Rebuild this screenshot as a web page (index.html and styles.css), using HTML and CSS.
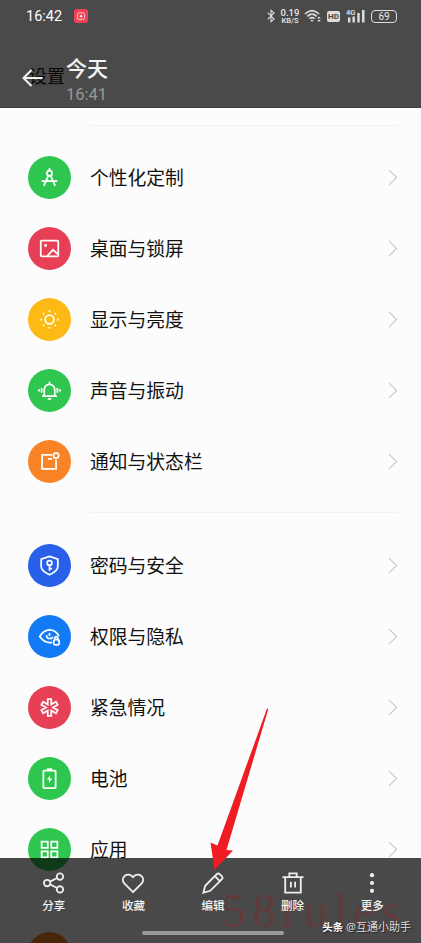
FILE: index.html
```html
<!DOCTYPE html>
<html lang="zh-CN">
<head>
<meta charset="utf-8">
<title>设置</title>
<link rel="stylesheet" href="styles.css">
</head>
<body>
<main class="phone">
  <header class="top">
    <div class="status">
      <span class="clock">16:42</span>
      <svg class="rec" width="14" height="14" viewBox="0 0 14 14"><rect width="14" height="14" rx="3" fill="#ee4458"/><rect x="3.5" y="3.8" width="7" height="6.8" rx="2" fill="none" stroke="#ffc6ca"/><circle cx="7" cy="7.2" r="1.3" fill="#ffe1e3"/></svg>
      <svg class="bt" width="8" height="14" viewBox="0 0 8 14" fill="none" stroke="#ddd" stroke-width="1.1"><path d="M.7 3.7 7 10 4 12.7V1.3L7 4 .7 10.3"/></svg>
      <span class="speed"><b>0.19</b><i>KB/S</i></span>
      <svg class="wifi" width="18" height="14" viewBox="0 0 18 14" fill="none" stroke="#ddd" stroke-width="1.6"><path d="M1 5Q8-1.7 15 5M3.3 7.4Q8 3 12.7 7.4M5.5 9.7Q8 7.5 10.5 9.7"/><path d="m8 13 1.6-2H6.4zM15 7.5l1.8 2h-3.6zM15 13l1.8-2h-3.6z" fill="#ddd" stroke="none"/></svg>
      <span class="hd">HD</span>
      <span class="signal"><em>4G</em><svg width="18" height="14" viewBox="0 0 18 14" fill="#ddd"><path d="M1 8.500h2.400v5H1zM5.500 7.500h2.400v6H5.500zM10.300 4h2.400v9.500h-2.400zM15 1h2.500v12.500H15z"/></svg></span>
      <span class="batt">69</span>
    </div>
    <div class="title">
      <span class="under">设置</span>
      <svg class="back" width="22" height="18" viewBox="0 0 22 18" fill="none" stroke="#f0f0f0" stroke-width="2"><path d="M9.500 1 1.500 9l8 8M1.500 9h19"/></svg>
      <div class="date"><h1>今天</h1><p>16:41</p></div>
    </div>
  </header>

  <section class="list">
    <hr class="rule">
    <div class="row"><span class="ic green"><svg viewBox="0 0 24 24"><circle cx="12" cy="7" r="3"/><path d="M12 1v3M10.700 9.800 5.500 21.500M13.300 9.800 18.500 21.500M3 16h18"/></svg></span><span>个性化定制</span><i class="chev"></i></div>
    <div class="row"><span class="ic red"><svg viewBox="0 0 24 24"><rect x="2" y="3" width="20" height="18" rx="1"/><path d="m9.500 20.500 6.500-7 5.500 5"/><circle cx="7.500" cy="8.500" r=".7"/></svg></span><span>桌面与锁屏</span><i class="chev"></i></div>
    <div class="row"><span class="ic yellow"><svg viewBox="0 0 24 24"><circle cx="12" cy="12" r="5"/><path d="M12 1.500v2M12 20.500v2M1.500 12h2M20.500 12h2M4.600 4.600 6 6M18 18l1.400 1.400M4.600 19.400 6 18M18 6l1.400-1.400"/></svg></span><span>显示与亮度</span><i class="chev"></i></div>
    <div class="row"><span class="ic green"><svg viewBox="0 0 24 24"><path d="M3.500 18.500h17M6 18v-7a6 6 0 0 1 12 0v7M12 2v3M10 21.700h4M3 9v5.500M21 9v5.500M0 10.500v2.500M24 10.500v2.500"/></svg></span><span>声音与振动</span><i class="chev"></i></div>
    <div class="row"><span class="ic orange"><svg viewBox="0 0 24 24"><path d="M15 4.500H3.500v16h16V10M10 9h5"/><circle cx="19.500" cy="5" r="3"/></svg></span><span>通知与状态栏</span><i class="chev"></i></div>
    <hr class="rule mid">
    <div class="row"><span class="ic indigo"><svg viewBox="0 0 24 24"><path d="m12 1.500 9.500 3.300V13q0 5-9.500 9.500Q2.500 18 2.500 13V4.800z"/><circle cx="12" cy="9" r="2.700"/><path d="M12 11.700V18M12 15.500h3"/></svg></span><span>密码与安全</span><i class="chev"></i></div>
    <div class="row"><span class="ic blue"><svg viewBox="0 0 24 24"><path d="M15 18.700Q7 20.500.8 12 5.500 4.500 12 4.500q7 0 10.800 7M12 8v3.500M8.700 10.500q0 4 4 4 2 0 3-2"/><rect x="16.800" y="15.500" width="6.200" height="6" rx="2"/><path d="M18 15v-1.500q1.700-2.500 3.500 0V15"/></svg></span><span>权限与隐私</span><i class="chev"></i></div>
    <div class="row"><span class="ic red"><svg viewBox="0 0 24 24"><path d="M10 2.300h4v6.200l5.300-3 2 3.500-5.300 3 5.300 3-2 3.500-5.300-3v6.200h-4v-6.200l-5.300 3-2-3.500L8 12 2.700 9l2-3.500 5.300 3z"/></svg></span><span>紧急情况</span><i class="chev"></i></div>
    <div class="row"><span class="ic green"><svg viewBox="0 0 24 24"><rect x="5" y="3" width="14" height="20" rx="1"/><path d="M9 1.300h6"/><path d="m12.700 8.500-3.700 5h2.500l-.2 3.500 3.700-5h-2.500z" fill="#fff" stroke="none"/></svg></span><span>电池</span><i class="chev"></i></div>
    <div class="row"><span class="ic green"><svg viewBox="0 0 24 24"><path d="M3 3h7v7H3zM14 3h7v7h-7zM3 14h7v7H3zM14 14h7v7h-7z"/></svg></span><span>应用</span><i class="chev"></i></div>
    <hr class="rule mid">
    <div class="row"><span class="ic orange"></span></div>
  </section>

  <footer class="bar">
    <span class="stamp">58rules</span>
    <nav class="actions">
      <a><svg viewBox="0 0 24 24"><circle cx="4.500" cy="12" r="3.500"/><circle cx="18.500" cy="5" r="3.500"/><circle cx="18.500" cy="19" r="3.500"/><path d="m7.700 10.500 7.700-4M7.700 13.500l7.700 4"/></svg>分享</a>
      <a><svg viewBox="0 0 24 24"><path d="M12 22 2.500 12.500C-2.500 6 6-1 12 5.500c6-6.500 14.500.5 9.500 7z"/></svg>收藏</a>
      <a><svg viewBox="0 0 24 24"><path d="m1.500 22.500 2-7.500L16.500 2q1.500-1 3 .5l2 2q1.500 1.500.5 3L9 20.500zM14 4.500l5.500 5.500"/></svg>编辑</a>
      <a><svg viewBox="0 0 24 24"><path d="M.5 5.500h23M3.500 5.500v17h17v-17M8 5V1.500h8V5M9.700 10.500v6.500M14.300 10.500v6.500"/></svg>删除</a>
      <a><svg viewBox="0 0 24 24" class="dots"><circle cx="12" cy="3.500" r="2.300"/><circle cx="12" cy="12" r="2.300"/><circle cx="12" cy="20.500" r="2.300"/></svg>更多</a>
    </nav>
    <div class="home"></div>
    <span class="credit"><b>头条</b> @互通小助手</span>
  </footer>
  <svg class="arrow" width="62" height="166" viewBox="0 0 62 166"><path d="M59 2.500q1.500-.5 1 1.500L18.500 144l6.500.5L6.500 164l-4-27.500 7 3z"/></svg>
</main>
</body>
</html>
```

FILE: styles.css
```css
* { box-sizing: border-box; }
body { margin: 0; background: #fcfcfc; font-family: "Noto Sans", "Noto Sans CJK SC", sans-serif; }
.phone { position: relative; width: 421px; height: 943px; overflow: hidden; }
.top { height: 108px; background: #4a4a4a; border-bottom: 1px solid #3f3f3f; }
.status { display: flex; align-items: center; height: 32px; padding: 0 24px 0 26px; color: #e8e8e8; }
.clock { width: 48px; font: 400 14.500px Roboto, sans-serif; color: #fff; }
.bt { margin-left: auto; }
.speed { display: flex; flex-direction: column; align-items: center; width: 20px; margin-left: 5px; }
.speed b { font: 500 9.500px/8px Roboto, sans-serif; }
.speed i { font: 500 7.500px/7px Roboto, sans-serif; }
.wifi { margin-left: 4px; }
.hd { width: 13px; height: 11px; margin-left: 5px; border-radius: 2px; background: #ddd; color: #444; font: 700 8px/11px Roboto, sans-serif; text-align: center; }
.signal { position: relative; display: flex; margin-left: 7px; }
.signal em { position: absolute; left: -1px; top: 0; font: 500 7.500px/8px Roboto, sans-serif; }
.batt { width: 26px; height: 13px; margin-left: 6px; border: 1px solid #ddd; border-radius: 4px; font: 10px/11px Roboto, sans-serif; text-align: center; }
.title { position: relative; display: flex; padding: 22px 0 0 66px; }
.under { position: absolute; left: 29px; top: 31px; color: #080808; font-size: 18px; line-height: 27px; }
.back { position: absolute; left: 22px; top: 37px; }
h1 { margin: 0; color: #f3f3f3; font-size: 21px; font-weight: 500; line-height: 28px; }
.date p { margin: 4px 0 0; color: #999; font: 16.500px/17px Roboto, sans-serif; }
.list { padding: 17px 23px 0 28px; }
.rule { height: 1px; margin: 0 0 16px 62px; border: 0; background: #f0f0f0; }
.mid { margin: 15px 0 17px 62px; }
.row { display: flex; align-items: center; height: 71px; gap: 19px; color: #111; font-size: 18.800px; }
.row > span:nth-child(2) { margin-top: -2px; }
.ic { display: flex; align-items: center; justify-content: center; width: 43px; height: 43px; border-radius: 50%; }
.ic svg { width: 21px; height: 21px; overflow: visible; fill: none; stroke: #fff; stroke-width: 2; }
.green { background: #2ec64f; }
.red { background: #e74056; }
.yellow { background: #fdb914; }
.orange { background: #f98427; }
.indigo { background: #2960ea; }
.blue { background: #127af5; }
.chev { width: 11px; height: 11px; margin: -1px 3px 0 auto; border: solid #c2c2c2; border-width: 1.500px 1.500px 0 0; transform: rotate(45deg); }
.bar { position: absolute; inset: 858px 0 0; background: rgba(0, 0, 0, .71); color: #f4f4f4; }
.actions { position: relative; display: flex; padding: 14px 9px 0 14px; }
.actions a { display: flex; flex: 1; flex-direction: column; align-items: center; gap: 3px; font-size: 11.500px; font-weight: 500; line-height: 17px; }
.actions svg { width: 22px; height: 22px; fill: none; stroke: #eee; stroke-width: 2; }
.actions .dots { fill: #eee; stroke: none; }
.home { position: absolute; left: 142px; top: 73px; width: 142px; height: 4px; border-radius: 2px; background: #9b9b9b; }
.stamp { position: absolute; left: 222px; top: 28px; color: rgba(150, 30, 30, .32); font: 48px/50px "Liberation Serif", serif; letter-spacing: 6px; }
.credit { position: absolute; right: 10px; top: 60px; color: #ddd; font-size: 11px; line-height: 18px; white-space: nowrap; text-shadow: 1px 1px 1px #222; }
.credit b { color: #fff; font-size: 10.500px; }
.arrow { position: absolute; left: 208px; top: 706px; fill: #ef1c24; }
```
